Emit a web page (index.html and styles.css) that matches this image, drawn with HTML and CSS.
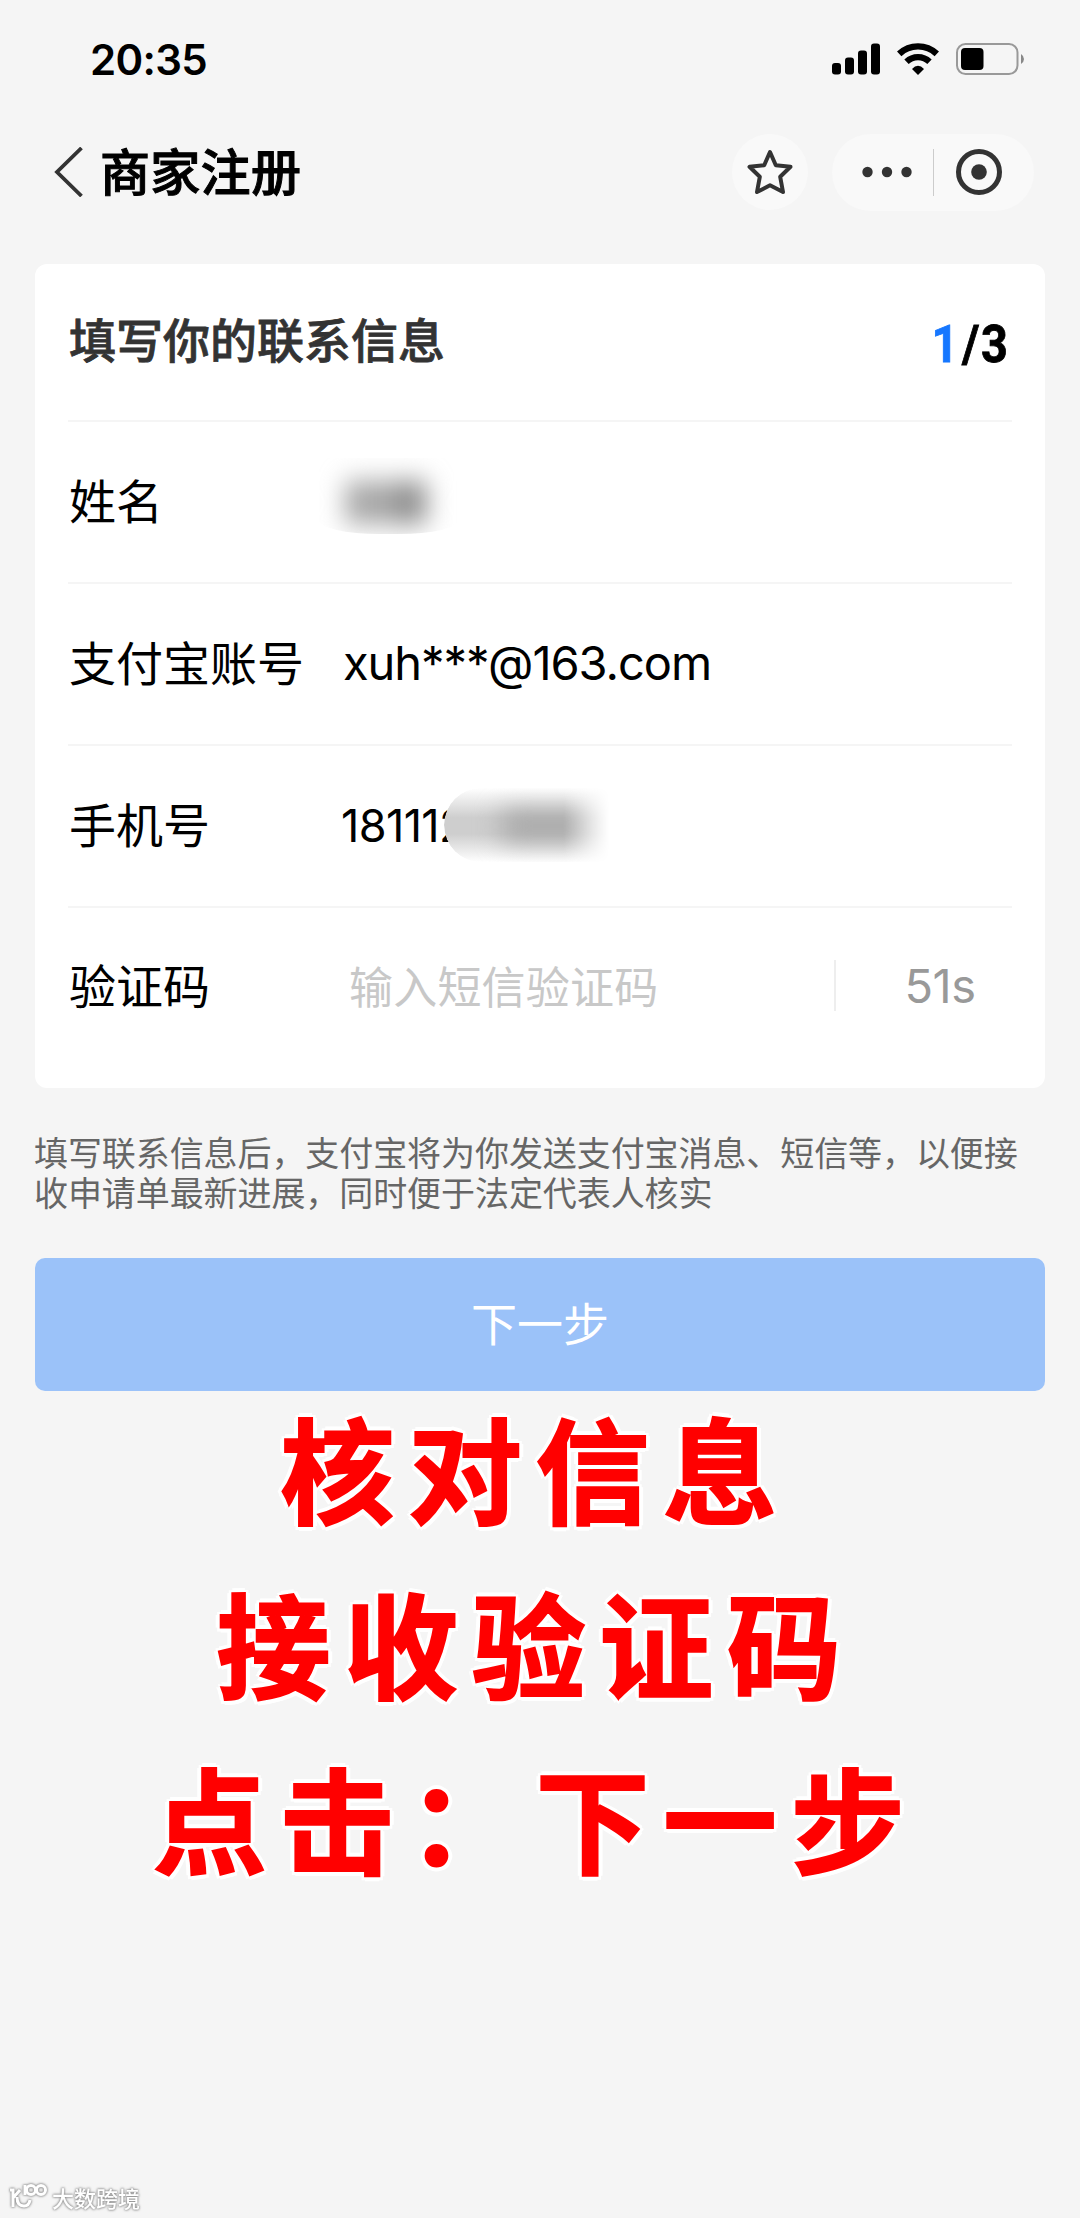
FILE: index.html
```html
<!DOCTYPE html>
<html lang="zh-CN">
<head>
<meta charset="UTF-8">
<title>商家注册</title>

<link rel="stylesheet" href="styles.css">
</head>

<body>

<!-- ===== STATUS BAR ===== -->
<div class="status-bar">
  <span class="time">20:35</span>
  <div class="status-icons">
    <svg width="48" height="32" viewBox="0 0 48 32">
      <rect x="0" y="20" width="9" height="11.5" rx="3"/>
      <rect x="13" y="14.5" width="9" height="17" rx="3"/>
      <rect x="26" y="7.5" width="9" height="24" rx="3"/>
      <rect x="39" y="0.5" width="9" height="31" rx="3"/>
    </svg>
    <svg class="wifi" width="42" height="32" viewBox="0 0 42 32">
      <path d="M2.2 10.800 A27.500 27.500 0 0 1 39.800 10.800" fill="none" stroke="#000" stroke-width="6.400"/>
      <path d="M9.500 18.800 A16.500 16.500 0 0 1 32.500 18.800" fill="none" stroke="#000" stroke-width="6.200"/>
      <path d="M15 26 Q21 19.500 27 26 L21 32 Z"/>
    </svg>
    <svg class="battery" width="69" height="32" viewBox="0 0 69 32">
      <rect x="1" y="1" width="60.500" height="30" rx="8.500" fill="none" stroke="#999" stroke-width="2"/>
      <rect x="5" y="5" width="22.500" height="22" rx="4"/>
      <path d="M65 11 Q68 13 68 16 Q68 19 65 21 Z" fill="#888"/>
    </svg>
  </div>
</div>

<!-- ===== NAV BAR ===== -->
<div class="nav-bar">
  <svg class="back" width="30" height="50" viewBox="0 0 30 50" fill="none" stroke="#333" stroke-width="3.800">
    <path d="M27.500 1 L3 25 L27.500 49"/>
  </svg>
  <h1>商家注册</h1>
  <div class="star">
    <svg width="48" height="48" viewBox="0 0 48 48" fill="none" stroke="#333" stroke-width="4" stroke-linejoin="round">
      <path d="M24 4 L29.800 17.200 L44.500 18.800 L34.200 28.800 L37 44 L24 37.300 L11 44 L13.800 28.800 L3.500 18.800 L18.200 17.200 Z"/>
    </svg>
  </div>
  <div class="capsule">
    <svg width="50" height="12" viewBox="0 0 50 12" fill="#333">
      <circle cx="5.500" cy="6" r="5.200"/>
      <circle cx="25" cy="6" r="5.200"/>
      <circle cx="44.500" cy="6" r="5.200"/>
    </svg>
    <span class="capsule-line"></span>
    <svg width="48" height="48" viewBox="0 0 48 48">
      <circle cx="24" cy="24" r="20.500" fill="none" stroke="#333" stroke-width="5"/>
      <circle cx="24" cy="24" r="7.800" fill="#333"/>
    </svg>
  </div>
</div>

<!-- ===== FORM CARD ===== -->
<div class="card">
  <div class="card-head">
    <h2>填写你的联系信息</h2>
    <div class="step"><span class="current">1</span><span class="slash">/</span>3</div>
  </div>
  <div class="row">
    <label>姓名</label>
    <div class="value"><span class="mask mask-name"></span></div>
  </div>
  <div class="row">
    <label>支付宝账号</label>
    <div class="value email">xuh***@163.com</div>
  </div>
  <div class="row">
    <label>手机号</label>
    <div class="value phone">181112<span class="mask mask-phone"></span></div>
  </div>
  <div class="row">
    <label>验证码</label>
    <div class="value placeholder">输入短信验证码</div>
    <div class="countdown">51s</div>
  </div>
</div>

<p class="note">填写联系信息后，支付宝将为你发送支付宝消息、短信等，以便接收申请单最新进展，同时便于法定代表人核实</p>

<button class="next">下一步</button>

<!-- ===== GUIDE TEXT ===== -->
<div class="guide">
  <div>核对信息</div>
  <div>接收验证码</div>
  <div>点击：下一步</div>
</div>

<!-- ===== WATERMARK ===== -->
<div class="watermark">
  <svg width="40" height="28" viewBox="0 0 40 28" fill="none" stroke="#fff" stroke-width="3">
    <path d="M1 7 H4 V24 M4 15 L11 7 M8 14 Q8 23 15 23 Q20 23 21 17"/>
    <path d="M16 2 V12"/>
    <circle cx="22" cy="7" r="4.500"/>
    <circle cx="32" cy="7" r="4.500"/>
  </svg>
  <span>大数跨境</span>
</div>

</body>
</html>
```
FILE: styles.css
```css
* {
  box-sizing: border-box;
}

body {
  margin: 0;
  height: 2218px;
  display: flex;
  flex-direction: column;
  overflow: hidden;
  background: #f5f5f5;
  color: #000;
  font-family: "Noto Sans CJK SC", sans-serif;
}

h1, h2, p {
  margin: 0;
}

svg {
  display: block;
  flex: none;
}

/* ===== STATUS BAR ===== */
.status-bar {
  height: 118px;
  padding: 0 55px 0 90px;
  display: flex;
  justify-content: space-between;
  align-items: center;
}

.time {
  font-family: Inter, sans-serif;
  font-size: 42px;
  font-weight: 600;
  letter-spacing: -0.7px;
}

.status-icons {
  display: flex;
}

.wifi {
  margin-left: 17px;
}

.battery {
  margin-left: 17px;
}

/* ===== NAV BAR ===== */
.nav-bar {
  height: 108px;
  padding: 0 46px 0 54px;
  display: flex;
  align-items: center;
}

.nav-bar h1 {
  flex: 1;
  margin-left: 16px;
  padding-bottom: 6px;
  font-size: 50px;
  font-weight: 500;
  line-height: 76px;
  letter-spacing: 0.3px;
  -webkit-text-stroke: 1px #000;
}

.star {
  width: 76px;
  height: 76px;
  margin-right: 24px;
  border-radius: 50%;
  background: #f9f9f9;
  display: flex;
  justify-content: center;
  align-items: center;
}

.capsule {
  width: 202px;
  height: 77px;
  padding: 0 31px 0 30px;
  border-radius: 39px;
  background: #f9f9f9;
  display: flex;
  justify-content: space-between;
  align-items: center;
}

.capsule-line {
  width: 1px;
  height: 47px;
  background: #ccc;
}

/* ===== CARD ===== */
.card {
  height: 824px;
  margin: 38px 35px 0;
  padding: 0 33px;
  border-radius: 12px;
  background: #fff;
}

.card-head {
  height: 156px;
  padding: 0 4px 4px 1px;
  display: flex;
  justify-content: space-between;
  align-items: center;
}

.card-head h2 {
  padding-bottom: 5px;
  color: #333;
  font-size: 47px;
  font-weight: 500;
  line-height: 60px;
  -webkit-text-stroke: 0.8px #333;
}

.step {
  padding-top: 10px;
  font-family: Roboto, sans-serif;
  font-size: 52px;
  font-weight: 700;
  line-height: 60px;
  transform: scaleX(0.9);
  transform-origin: right;
  -webkit-text-stroke: 0.8px;
}

.current {
  color: #1677ff;
}

.slash {
  margin: 0 2px 0 4px;
}

.row {
  height: 162px;
  padding: 0 0 4px 1px;
  border-top: 2px solid #f5f5f5;
  display: flex;
  align-items: center;
  font-size: 47px;
  line-height: 64px;
}

.row:last-child {
  padding-bottom: 6px;
}

.row label {
  width: 274px;
  flex: none;
  margin-top: -3px;
}

.value {
  position: relative;
  flex: 1;
  height: 64px;
}

.email,
.phone,
.countdown {
  font-family: Inter, sans-serif;
}

.email {
  padding-top: 1px;
  letter-spacing: -1.05px;
}

.phone {
  padding-top: 2px;
  font-size: 45px;
  letter-spacing: -0.6px;
  left: -2px;
}

.placeholder {
  padding-left: 6px;
  color: #c8c8c8;
  font-size: 44px;
  letter-spacing: 0.2px;
}

.countdown {
  width: 178px;
  height: 51px;
  padding-left: 32px;
  border-left: 2px solid #eee;
  color: #999;
  font-size: 47px;
  line-height: 51px;
  letter-spacing: -0.5px;
  text-align: center;
}

/* smudges over private data */
.mask {
  position: absolute;
  overflow: hidden;
}

.mask::before {
  content: "";
  position: absolute;
  filter: blur(13px);
}

.mask-name {
  left: -24px;
  top: -10px;
  width: 140px;
  height: 76px;
  border-radius: 0 0 60px 60px / 0 0 14px 14px;
}

.mask-name::before {
  left: 27px;
  top: 23px;
  width: 80px;
  height: 43px;
  background: linear-gradient(90deg, #a0a0a0, #acacac 45%, #888 80%);
}

.mask-phone {
  left: 103px;
  top: -4px;
  width: 176px;
  height: 74px;
  border-radius: 37px 0 0 37px;
  background: linear-gradient(180deg, #fff, #cecece 40%, #cecece 62%, #fff);
  -webkit-mask: linear-gradient(90deg, #000 68%, transparent 94%);
  mask: linear-gradient(90deg, #000 68%, transparent 94%);
}

.mask-phone::before {
  left: 58px;
  top: 24px;
  width: 92px;
  height: 28px;
  background: #a4a4a4;
}

/* ===== NOTE + BUTTON ===== */
.note {
  margin: 44px 50px 0 34px;
  color: #666;
  font-size: 34px;
  line-height: 39.5px;
  letter-spacing: -0.08px;
}

.next {
  flex: none;
  height: 133px;
  margin: 47px 35px 0;
  padding: 0 0 7px;
  border: none;
  border-radius: 10px;
  background: #9bc2f9;
  color: #fff;
  font-family: inherit;
  font-size: 46px;
}

/* ===== GUIDE ===== */
.guide {
  margin-top: -13px;
  padding-right: 9px;
  color: #f00;
  font-size: 114px;
  font-weight: 700;
  line-height: 175px;
  letter-spacing: 13.6px;
  text-align: center;
  -webkit-text-stroke: 2px #f00;
  text-shadow: 5px 0 #fff, -5px 0 #fff, 0 5px #fff, 0 -5px #fff,
    3.5px 3.5px #fff, -3.5px 3.5px #fff, 3.5px -3.5px #fff, -3.5px -3.5px #fff;
}

/* ===== WATERMARK ===== */
.watermark {
  margin: auto 0 5px 9px;
  display: flex;
  align-items: center;
  gap: 3px;
  color: #fff;
  font-size: 22px;
  font-weight: 500;
  line-height: 32px;
  filter: drop-shadow(0 0 1px #888) drop-shadow(0 0 1px #aaa);
}
```
